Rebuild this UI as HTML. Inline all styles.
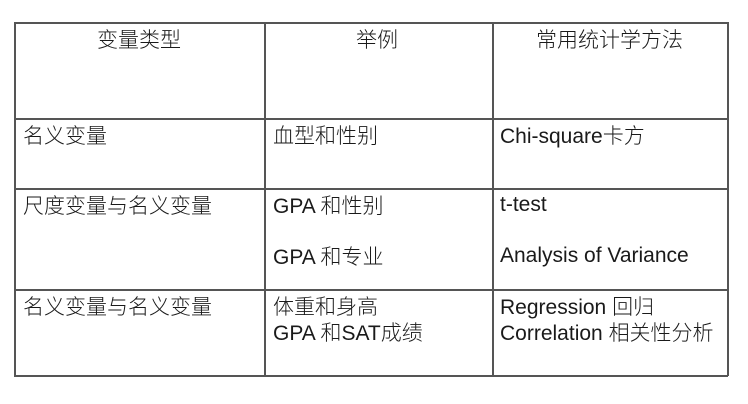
<!DOCTYPE html>
<html><head><meta charset="utf-8"><style>
body{margin:0;width:748px;height:404px;background:#fff;position:relative;overflow:hidden;font-family:"Liberation Sans","Noto Sans CJK SC",sans-serif;color:#1a1a1a}
.l{position:absolute;background:#555}
.t{position:absolute;font-size:21px;line-height:26px;white-space:nowrap}
.c{font-family:"Noto Sans CJK SC",sans-serif;font-weight:300}
</style></head><body>
<div class="l" style="left:14px;top:22px;width:714px;height:1.5px"></div>
<div class="l" style="left:14px;top:118px;width:714px;height:1.5px"></div>
<div class="l" style="left:14px;top:188px;width:714px;height:1.5px"></div>
<div class="l" style="left:14px;top:289px;width:714px;height:1.5px"></div>
<div class="l" style="left:14px;top:375px;width:714px;height:1.5px"></div>
<div class="l" style="left:14px;top:22px;width:1.5px;height:354px"></div>
<div class="l" style="left:264px;top:22px;width:1.5px;height:354px"></div>
<div class="l" style="left:492px;top:22px;width:1.5px;height:354px"></div>
<div class="l" style="left:727px;top:22px;width:1.5px;height:354px"></div>

<div class="t c" style="left:97px;top:26px">变量类型</div>
<div class="t c" style="left:356px;top:26px">举例</div>
<div class="t c" style="left:536px;top:26px">常用统计学方法</div>

<div class="t" style="left:23px;top:122px"><span class="c">名义变量</span></div>
<div class="t" style="left:273px;top:122px"><span class="c">血型和性别</span></div>
<div class="t" style="left:500px;top:122px">Chi-square<span class="c">卡方</span></div>

<div class="t" style="left:23px;top:192px"><span class="c">尺度变量与名义变量</span></div>
<div class="t" style="left:273px;top:192px">GPA <span class="c">和性别</span></div>
<div class="t" style="left:500px;top:192px">t-test</div>
<div class="t" style="left:273px;top:243px">GPA <span class="c">和专业</span></div>
<div class="t" style="left:500px;top:243px">Analysis of Variance</div>

<div class="t" style="left:23px;top:293px"><span class="c">名义变量与名义变量</span></div>
<div class="t" style="left:273px;top:293px"><span class="c">体重和身高</span></div>
<div class="t" style="left:273px;top:319px">GPA <span class="c">和</span>SAT<span class="c">成绩</span></div>
<div class="t" style="left:500px;top:293px">Regression <span class="c">回归</span></div>
<div class="t" style="left:500px;top:319px">Correlation <span class="c">相关性分析</span></div>
</body></html>
